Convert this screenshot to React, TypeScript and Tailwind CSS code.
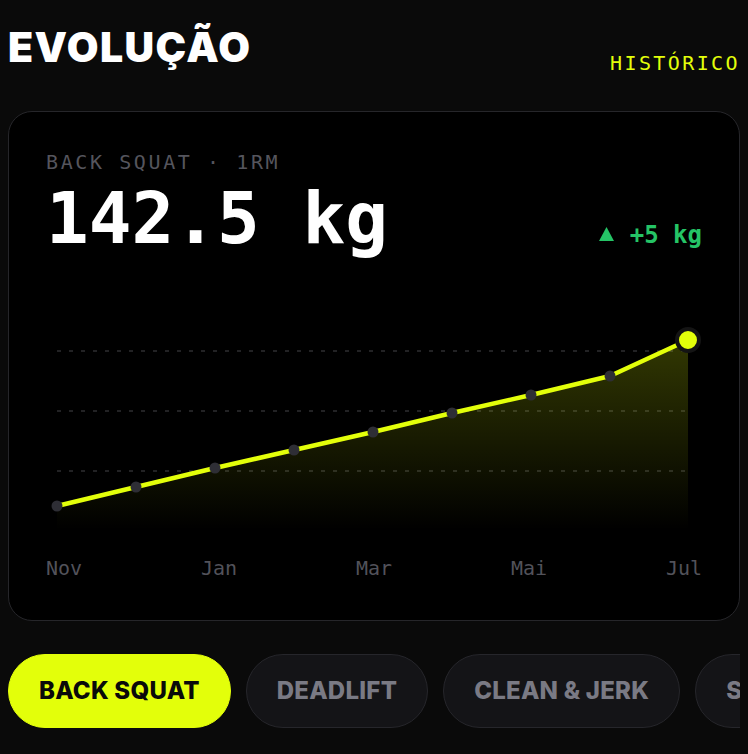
import React from "react";

const LIME = "#e3ff0a";

// monthly 1RM trend, already mapped to chart coordinates
const points: [number, number][] = [
  [11, 206],
  [90, 187],
  [169, 168],
  [248, 150],
  [327, 132],
  [406, 113],
  [485, 95],
  [564, 76],
  [642, 40],
];

const months = ["Nov", "Jan", "Mar", "Mai", "Jul"];
const lifts = ["BACK SQUAT", "DEADLIFT", "CLEAN & JERK", "SNATCH"];

function TrendChart() {
  const line = points.map(([x, y], i) => `${i === 0 ? "M" : "L"}${x} ${y}`).join(" ");
  const last = points[points.length - 1];
  const area = `${line} L${last[0]} 230 L${points[0][0]} 230 Z`;

  return (
    <svg width="656" height="240" viewBox="0 0 656 240" className="block">
      <defs>
        <linearGradient id="fill" x1="0" y1="0" x2="0" y2="1" gradientUnits="objectBoundingBox">
          <stop offset="0%" stopColor={LIME} stopOpacity="0.22" />
          <stop offset="100%" stopColor={LIME} stopOpacity="0" />
        </linearGradient>
      </defs>
      {[51, 111, 171].map((y) => (
        <line key={y} x1="11" x2="643" y1={y} y2={y} stroke="#2e2e30" strokeWidth="1.5" strokeDasharray="4 8" />
      ))}
      <path d={area} fill="url(#fill)" />
      <path d={line} fill="none" stroke={LIME} strokeWidth="4.5" strokeLinejoin="round" strokeLinecap="round" />
      {points.slice(0, -1).map(([x, y]) => (
        <circle key={x} cx={x} cy={y} r="5.5" fill="#2e2e35" />
      ))}
      <circle cx={last[0]} cy={last[1]} r="11" fill={LIME} stroke="#141414" strokeWidth="4" />
    </svg>
  );
}

export default function App() {
  return (
    <div className="w-[748px] h-[754px] bg-[#0a0a0a] px-2 pt-[27px] overflow-hidden">
      {/* Header */}
      <div className="flex justify-between items-start h-[46px]">
        <h1 className="font-['Inter',sans-serif] text-[41px] leading-none font-black text-white tracking-[0.035em]">
          EVOLUÇÃO
        </h1>
        <span className="mt-[26px] font-['DejaVu_Sans_Mono',monospace] text-[20px] leading-none tracking-[0.12em] text-[#e3ff0a]">
          HISTÓRICO
        </span>
      </div>

      {/* Progress card */}
      <div className="mt-[38px] rounded-[24px] border border-[#26262a] bg-black px-[37px] pt-[40px] pb-[42px]">
        <p className="font-['DejaVu_Sans_Mono',monospace] text-[20px] leading-none tracking-[0.13em] text-[#55555d]">
          BACK SQUAT · 1RM
        </p>
        <div className="mt-[11px] flex justify-between items-baseline">
          <span className="font-['DejaVu_Sans_Mono',monospace] text-[71px] leading-none font-bold text-white">
            142.5 kg
          </span>
          <span className="flex items-baseline gap-[16px] font-['DejaVu_Sans_Mono',monospace] text-[24px] leading-none font-bold text-[#25c466]">
            <svg width="15" height="14" viewBox="0 0 15 14" className="self-center -mt-[3px]">
              <path d="M7.5 0 L15 14 L0 14 Z" fill="#25c466" />
            </svg>
            <span>+5 kg</span>
          </span>
        </div>

        <div className="mt-[46px]">
          <TrendChart />
        </div>

        <div className="mt-[18px] flex justify-between font-['DejaVu_Sans_Mono',monospace] text-[20px] leading-none text-[#52525a]">
          {months.map((m) => (
            <span key={m}>{m}</span>
          ))}
        </div>
      </div>

      {/* Lift selector */}
      <div className="mt-[33px] flex gap-[15px] overflow-hidden">
        {lifts.map((lift, i) => (
          <button
            key={lift}
            className={`shrink-0 h-[74px] px-[30px] rounded-full whitespace-nowrap font-['Inter',sans-serif] text-[24px] font-extrabold tracking-[0.01em] ${
              i === 0
                ? "bg-[#e3ff0a] text-[#0a0a0a] border border-[#e3ff0a]"
                : "bg-[#141417] text-[#7a7a84] border border-[#26262b]"
            }`}
          >
            {lift}
          </button>
        ))}
      </div>
    </div>
  );
}
